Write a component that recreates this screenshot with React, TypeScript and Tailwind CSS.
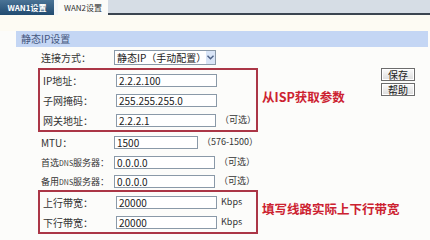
import React from 'react';

const font = { fontFamily: '"SimSun", "Noto Sans CJK SC", "Liberation Sans", sans-serif' };

const Input = ({ value }: { value: string }) => (
  <div className="w-[101px] h-[13px] border border-[#8a99a8] bg-white text-[10px] leading-[11px] pl-[2px] text-[#222]">
    {value}
  </div>
);

const Row = ({
  label,
  value,
  suffix,
  h = 'h-[20px]',
}: {
  label: React.ReactNode;
  value: string;
  suffix?: string;
  h?: string;
}) => (
  <div className={`flex items-center ${h}`}>
    <div className="w-[76px] shrink-0 pl-[3px] text-[10px] text-[#333] whitespace-nowrap">{label}</div>
    <Input value={value} />
    {suffix && <div className="ml-[4px] text-[9px] text-[#333] whitespace-nowrap">{suffix}</div>}
  </div>
);

const DnsLabel = ({ pre }: { pre: string }) => (
  <span className="text-[9px]">
    {pre}
    <span className="text-[7px]">DNS</span>服务器：
  </span>
);

const Btn = ({ label }: { label: string }) => (
  <div className="w-[34px] h-[13px] border border-[#6c6c6c] bg-gradient-to-b from-[#fbfbfb] to-[#dcdcdc] text-[10px] leading-[11px] text-center text-[#222] shadow-[inset_0_0_0_1px_#fff]">
    {label}
  </div>
);

export default function App() {
  return (
    <div className="w-[430px] h-[240px] overflow-hidden bg-[#fcfcfa]" style={font}>
      {/* tabs */}
      <div className="flex h-[15px]">
        <div className="w-[54px] bg-gradient-to-b from-[#4a7396] to-[#214b70] text-white text-[8px] leading-[15px] text-center font-bold">
          WAN1设置
        </div>
        <div className="w-[4px] bg-[#f4f6f8]" />
        <div className="w-[50px] bg-[#fbfbf8] text-[#333] text-[8px] leading-[15px] text-center">
          WAN2设置
        </div>
        <div className="flex-1 bg-[#d6dde5] border-b-2 border-[#3b4550]" />
      </div>

      <div className="h-[16px] bg-[#fdfbf3]" />

      {/* section header */}
      <div className="ml-[16px] mr-[2px] h-[16px] bg-[#c4d6f4] text-[10px] leading-[16px] pl-[5px] text-[#44567e]">
        静态IP设置
      </div>

      <div className="flex">
        <div className="w-[258px] shrink-0 pl-[38px]">
          <div className="flex items-center h-[20px]">
            <div className="w-[76px] shrink-0 pl-[3px] text-[10px] text-[#333]">连接方式：</div>
            <div className="w-[102px] h-[15px] border border-[#8a99a8] bg-white flex items-center">
              <div className="flex-1 pl-[2px] text-[10px] text-[#222] whitespace-nowrap">静态IP（手动配置）</div>
              <div className="w-[13px] h-[13px] bg-[#d9e5f7] flex items-center justify-center">
                <svg width="7" height="5" viewBox="0 0 7 5">
                  <path d="M0.5 0.8 L3.5 3.8 L6.5 0.8" fill="none" stroke="#4d6185" strokeWidth="1.4" />
                </svg>
              </div>
            </div>
          </div>

          <div className="mt-[1px] w-[220px] border-2 border-[#ab3646]">
            <Row label="IP地址：" value="2.2.2.100" />
            <Row label="子网掩码：" value="255.255.255.0" />
            <Row label="网关地址：" value="2.2.2.1" suffix="（可选）" />
          </div>

          <Row label="MTU：" value="1500" suffix="（576-1500）" />
          <Row label={<DnsLabel pre="首选" />} value="0.0.0.0" suffix="（可选）" />
          <Row label={<DnsLabel pre="备用" />} value="0.0.0.0" suffix="（可选）" h="h-[18px]" />

          <div className="w-[220px] border-2 border-[#ab3646]">
            <Row label="上行带宽：" value="20000" suffix="Kbps" />
            <Row label="下行带宽：" value="20000" suffix="Kbps" />
          </div>
        </div>

        <div className="w-[115px] shrink-0 flex flex-col ml-[4px]">
          <div className="h-[41px]" />
          <div className="text-[12.5px] font-bold text-[#cc2230] whitespace-nowrap">从ISP获取参数</div>
          <div className="h-[93px]" />
          <div className="text-[12.5px] font-bold text-[#cc2230] whitespace-nowrap">填写线路实际上下行带宽</div>
        </div>

        <div className="ml-[4px] mt-[21px] flex flex-col gap-[2px]">
          <Btn label="保存" />
          <Btn label="帮助" />
        </div>
      </div>
    </div>
  );
}
